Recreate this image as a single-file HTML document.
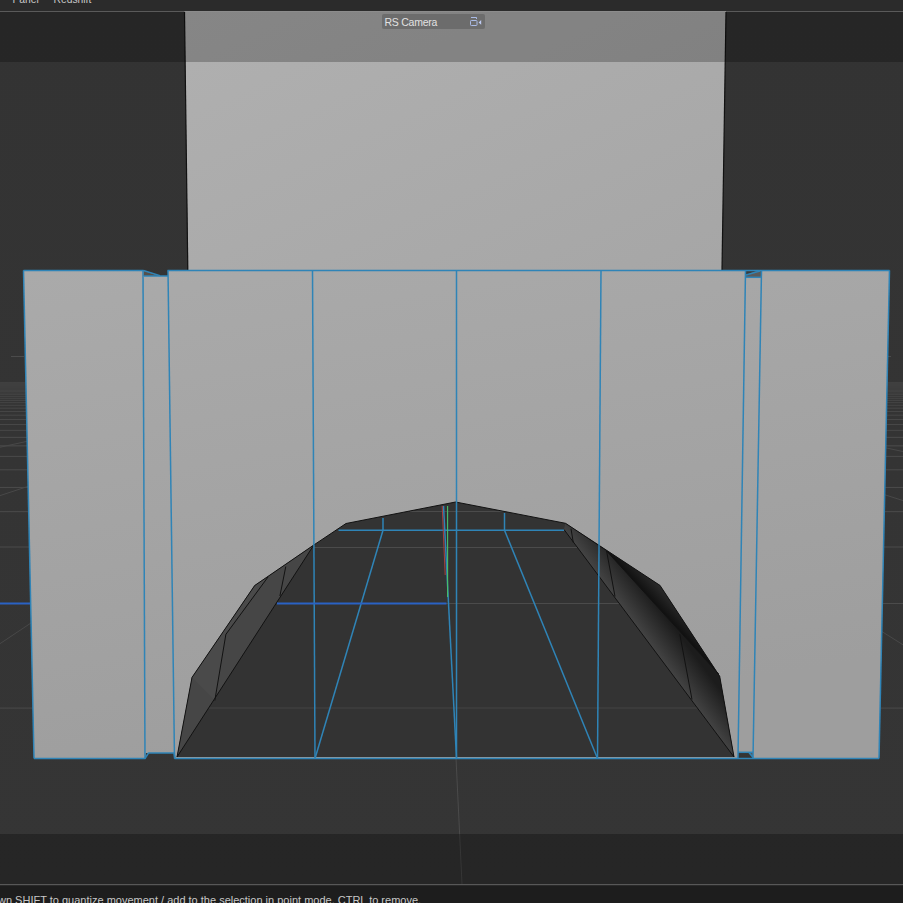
<!DOCTYPE html>
<html><head><meta charset="utf-8">
<style>
html,body{margin:0;padding:0;width:903px;height:903px;overflow:hidden;background:#2b2b2b}
svg{position:absolute;left:0;top:0;display:block}
.t{position:absolute;font-family:"Liberation Sans",sans-serif;white-space:nowrap;line-height:1}
</style></head><body>
<svg width="903" height="903" viewBox="0 0 903 903">
<defs>
<linearGradient id="gvp" x1="0" y1="0" x2="0" y2="1">
<stop offset="0" stop-color="#333333"/><stop offset="1" stop-color="#353535"/>
</linearGradient>
<linearGradient id="gwall" x1="0" y1="0" x2="1" y2="1">
<stop offset="0" stop-color="#b0b0b0"/><stop offset="1" stop-color="#a6a6a6"/>
</linearGradient>
<linearGradient id="gface" x1="0" y1="0" x2="0.3" y2="1">
<stop offset="0" stop-color="#aaaaaa"/><stop offset="1" stop-color="#9e9e9e"/>
</linearGradient>
<linearGradient id="gro" gradientUnits="userSpaceOnUse" x1="650" y1="599" x2="662" y2="588">
<stop offset="0" stop-color="#101010"/><stop offset="1" stop-color="#2a2a2a"/>
</linearGradient>
<linearGradient id="gri" gradientUnits="userSpaceOnUse" x1="630" y1="620" x2="655" y2="601.5">
<stop offset="0" stop-color="#454545"/><stop offset="1" stop-color="#1c1c1c"/>
</linearGradient>
</defs>
<!-- menu bar -->
<rect x="0" y="0" width="903" height="11" fill="#2b2b2b"/>
<rect x="0" y="11" width="903" height="1" fill="#5a5a5a"/>
<!-- viewport -->
<rect x="0" y="12" width="903" height="872" fill="url(#gvp)"/>
<!-- floor grid -->
<g stroke-width="1" fill="none">
<line x1="0" y1="708.09" x2="903" y2="708.09" stroke="#4b4b4b" stroke-opacity="1"/>
<line x1="0" y1="547.02" x2="903" y2="547.02" stroke="#4b4b4b" stroke-opacity="1"/>
<line x1="0" y1="511.66" x2="903" y2="511.66" stroke="#4b4b4b" stroke-opacity="1"/>
<line x1="0" y1="487.43" x2="903" y2="487.43" stroke="#4b4b4b" stroke-opacity="1"/>
<line x1="0" y1="469.8" x2="903" y2="469.8" stroke="#4b4b4b" stroke-opacity="1"/>
<line x1="0" y1="456.39" x2="903" y2="456.39" stroke="#4b4b4b" stroke-opacity="1"/>
<line x1="0" y1="445.85" x2="903" y2="445.85" stroke="#4b4b4b" stroke-opacity="1"/>
<line x1="0" y1="437.35" x2="903" y2="437.35" stroke="#4b4b4b" stroke-opacity="1"/>
<line x1="0" y1="430.35" x2="903" y2="430.35" stroke="#4b4b4b" stroke-opacity="0.88"/>
<line x1="0" y1="424.48" x2="903" y2="424.48" stroke="#4b4b4b" stroke-opacity="0.87"/>
<line x1="0" y1="419.49" x2="903" y2="419.49" stroke="#4b4b4b" stroke-opacity="0.85"/>
<line x1="0" y1="415.19" x2="903" y2="415.19" stroke="#4b4b4b" stroke-opacity="0.83"/>
<line x1="0" y1="411.46" x2="903" y2="411.46" stroke="#4b4b4b" stroke-opacity="0.82"/>
<line x1="0" y1="408.18" x2="903" y2="408.18" stroke="#4b4b4b" stroke-opacity="0.8"/>
<line x1="0" y1="405.28" x2="903" y2="405.28" stroke="#4b4b4b" stroke-opacity="0.78"/>
<line x1="0" y1="402.69" x2="903" y2="402.69" stroke="#4b4b4b" stroke-opacity="0.76"/>
<line x1="0" y1="400.38" x2="903" y2="400.38" stroke="#4b4b4b" stroke-opacity="0.75"/>
<line x1="0" y1="398.29" x2="903" y2="398.29" stroke="#4b4b4b" stroke-opacity="0.73"/>
<line x1="0" y1="396.39" x2="903" y2="396.39" stroke="#4b4b4b" stroke-opacity="0.71"/>
<line x1="0" y1="394.67" x2="903" y2="394.67" stroke="#4b4b4b" stroke-opacity="0.7"/>
<line x1="0" y1="393.09" x2="903" y2="393.09" stroke="#4b4b4b" stroke-opacity="0.68"/>
<line x1="0" y1="391.64" x2="903" y2="391.64" stroke="#4b4b4b" stroke-opacity="0.66"/>
<line x1="0" y1="390.31" x2="903" y2="390.31" stroke="#4b4b4b" stroke-opacity="0.65"/>
<line x1="0" y1="389.08" x2="903" y2="389.08" stroke="#4b4b4b" stroke-opacity="0.63"/>
<line x1="0" y1="387.94" x2="903" y2="387.94" stroke="#4b4b4b" stroke-opacity="0.61"/>
<line x1="0" y1="386.88" x2="903" y2="386.88" stroke="#4b4b4b" stroke-opacity="0.59"/>
<line x1="0" y1="385.89" x2="903" y2="385.89" stroke="#4b4b4b" stroke-opacity="0.58"/>
<line x1="0" y1="384.97" x2="903" y2="384.97" stroke="#4b4b4b" stroke-opacity="0.56"/>
<line x1="0" y1="384.1" x2="903" y2="384.1" stroke="#4b4b4b" stroke-opacity="0.54"/>
<line x1="0" y1="383.29" x2="903" y2="383.29" stroke="#4b4b4b" stroke-opacity="0.53"/>
<line x1="0" y1="382.53" x2="903" y2="382.53" stroke="#4b4b4b" stroke-opacity="0.51"/>
<line x1="437" y1="352" x2="-2091.1" y2="903" stroke="#484848"/>
<line x1="437" y1="352" x2="-1239.84" y2="903" stroke="#484848"/>
<line x1="437" y1="352" x2="-388.57" y2="903" stroke="#484848"/>
<line x1="437" y1="352" x2="1313.96" y2="903" stroke="#484848"/>
<line x1="437" y1="352" x2="2165.22" y2="903" stroke="#484848"/>
<line x1="437" y1="352" x2="3016.48" y2="903" stroke="#484848"/>
</g>
<g stroke="#4b4b4b" stroke-width="1">
<line x1="11" y1="356.5" x2="24" y2="356.5"/>
<line x1="886" y1="356.5" x2="891" y2="356.5"/>
<line x1="0" y1="603.5" x2="903" y2="603.5"/>
</g>
<line x1="0" y1="603.5" x2="30" y2="603.5" stroke="#2a62c4" stroke-width="2"/>

<!-- back wall -->
<polygon points="184.5,12 726,12 722,270 188,270" fill="url(#gwall)"/>
<line x1="184.5" y1="12" x2="187.8" y2="270" stroke="#111" stroke-width="1.2"/>
<line x1="726" y1="12" x2="722" y2="270" stroke="#111" stroke-width="1.2"/>

<!-- front structure faces -->
<polygon points="23.5,270.5 143,270.5 160,276 168,276 168,270.5 889.5,270.5 879,758.5 753,758.5 753,752 738,752 738,758.5 175,758.5 174,753 146,753 145,758.5 34,758.5" fill="url(#gface)"/>
<polygon points="749,752.5 753,752.5 753,757.5" fill="#5a5a5a"/>
<!-- gap top dark gray -->
<polygon points="143.5,270.8 160,276 143.5,276" fill="#55504b"/>
<polygon points="745.5,271 761,271 761,277 745.5,277" fill="#5a5a5a"/>
<polygon points="746,271 756,271 746,275" fill="#3a3a3a"/>

<!-- arch interior -->
<polygon points="177,757 192,677.4 254.7,585.5 313.8,545 346,523.5 455.6,502 565.5,523.3 660,585.4 719.7,676.3 734,757" fill="#333"/>
<!-- left facets -->
<polygon points="177,757 192,677.4 254.7,585.5 313.8,545" fill="#464646"/>
<polygon points="192,677.4 254.7,585.5 268,577 226,634.2 214.8,700.6" fill="#4a4a4a"/>
<!-- right facets -->
<polygon points="564,529.5 565.5,523.3 606.6,551 718.6,674 734,757" fill="url(#gri)"/>
<polygon points="565.5,523.3 660,585.4 719.7,676.3 734,757 718.6,674 606.6,551" fill="url(#gro)"/>

<!-- interior grid lines -->
<g stroke="#4b4b4b" stroke-width="1">
<line x1="410" y1="511.5" x2="504" y2="511.5"/>
<line x1="314" y1="547.5" x2="577" y2="547.5"/>
<line x1="446" y1="603.5" x2="619" y2="603.5"/>
<line x1="209" y1="708" x2="697" y2="708" stroke="#3f3f3f" stroke-width="1.6"/>
<line x1="456" y1="758" x2="462" y2="884"/>
</g>
<!-- arch black outlines -->
<g stroke="#121212" stroke-width="1" fill="none">
<polyline points="177,757 192,677.4 254.7,585.5 313.8,545 346,523.5 455.6,502 565.5,523.3 660,585.4 719.7,676.3 734,757"/>
<line x1="177" y1="757" x2="313.8" y2="545"/>
<line x1="564" y1="529.5" x2="734" y2="757"/>
<line x1="214.8" y1="700.6" x2="225.9" y2="634.2"/>
<line x1="226" y1="634.2" x2="268" y2="577"/>
<line x1="279.9" y1="596" x2="285.8" y2="566.5"/>
<line x1="571" y1="528.7" x2="573.3" y2="542.6"/>
<line x1="606.6" y1="551" x2="615" y2="596.5"/>
<line x1="679.8" y1="634.2" x2="692" y2="699.5"/>
<line x1="606.6" y1="551" x2="718.6" y2="674"/>
</g>

<!-- blue edges -->
<g stroke="#2f84b7" stroke-width="1.5" fill="none" stroke-linejoin="round">
<line x1="23.5" y1="270.5" x2="143.5" y2="270.5"/>
<line x1="167.5" y1="270.5" x2="889.5" y2="270.5"/>
<polyline points="34,758.5 145,758.5 148.5,753 174,753 175,758.5 879,758.5"/>
<line x1="738" y1="752.3" x2="753" y2="752.3"/>
<line x1="749" y1="752.5" x2="753" y2="757.5"/>
<line x1="23.5" y1="270.5" x2="34" y2="758.5"/>
<line x1="143" y1="270.5" x2="145" y2="758.5"/>
<line x1="144" y1="276" x2="168" y2="276"/>
<line x1="143.5" y1="270.5" x2="160" y2="275.6"/>
<line x1="168" y1="270.5" x2="174.5" y2="758.5"/>
<line x1="312.5" y1="270.5" x2="315" y2="758.5"/>
<line x1="456.5" y1="270.5" x2="456.5" y2="758.5"/>
<line x1="601" y1="270.5" x2="597.5" y2="758.5"/>
<line x1="745.5" y1="270.5" x2="738" y2="758.5"/>
<line x1="761.5" y1="270.5" x2="753" y2="758.5"/>
<line x1="745.5" y1="277.3" x2="761.5" y2="277.3"/>
<line x1="746" y1="275" x2="760" y2="271"/>
<line x1="889.5" y1="270.5" x2="879" y2="758.5"/>
<line x1="338.5" y1="530.2" x2="564" y2="530.2"/>
<line x1="383" y1="518" x2="383" y2="530.2"/>
<line x1="504.5" y1="513" x2="504.5" y2="530.2"/>
<line x1="383" y1="530.2" x2="315" y2="758.5"/>
<line x1="504.5" y1="530.2" x2="597.5" y2="758.5"/>
<line x1="443.5" y1="506" x2="456.5" y2="758"/>
</g>
<line x1="277" y1="603.5" x2="446.5" y2="603.5" stroke="#2a62c4" stroke-width="2"/>
<line x1="442.2" y1="506" x2="445.2" y2="575" stroke="#a84040" stroke-width="1"/>
<line x1="447.6" y1="506" x2="447.6" y2="597" stroke="#48c068" stroke-width="1.1"/>

<!-- overlays: top and bottom safe frame bands -->
<rect x="0" y="12" width="903" height="50" fill="#000" fill-opacity="0.24"/>
<rect x="184.5" y="11" width="541.5" height="1" fill="#8c8c8c"/>
<rect x="0" y="834" width="903" height="50" fill="#000" fill-opacity="0.28"/>
<!-- status bar -->
<rect x="0" y="884" width="903" height="1" fill="#585858"/>
<rect x="0" y="885" width="903" height="1" fill="#2a2a2a"/>
<rect x="0" y="886" width="903" height="17" fill="#1d1d1d"/>
<!-- camera label -->
<rect x="382" y="14" width="103" height="15" rx="2" fill="#6c6c6c"/>
<g stroke="#aabbe6" stroke-width="1" fill="none">
<path d="M471,17.5 H476.5 V19"/>
<rect x="470.5" y="20.5" width="6.5" height="5" rx="0.8"/>
</g>
<path d="M478.6,22.4 L481.2,20 V24.8 Z" fill="#c0ccf4"/>
</svg>
<div class="t" style="left:12.5px;top:-4.7px;font-size:10.3px;color:#c8c8c8">Panel</div>
<div class="t" style="left:53.5px;top:-4.7px;font-size:10.3px;color:#c8c8c8">Redshift</div>
<div class="t" style="left:384.5px;top:17.1px;font-size:10.5px;letter-spacing:-0.25px;color:#e2e2e2">RS Camera</div>
<div class="t" style="left:-2px;top:895px;font-size:11px;color:#c8c8c8">wn SHIFT to quantize movement / add to the selection in point mode, CTRL to remove.</div>
</body></html>
